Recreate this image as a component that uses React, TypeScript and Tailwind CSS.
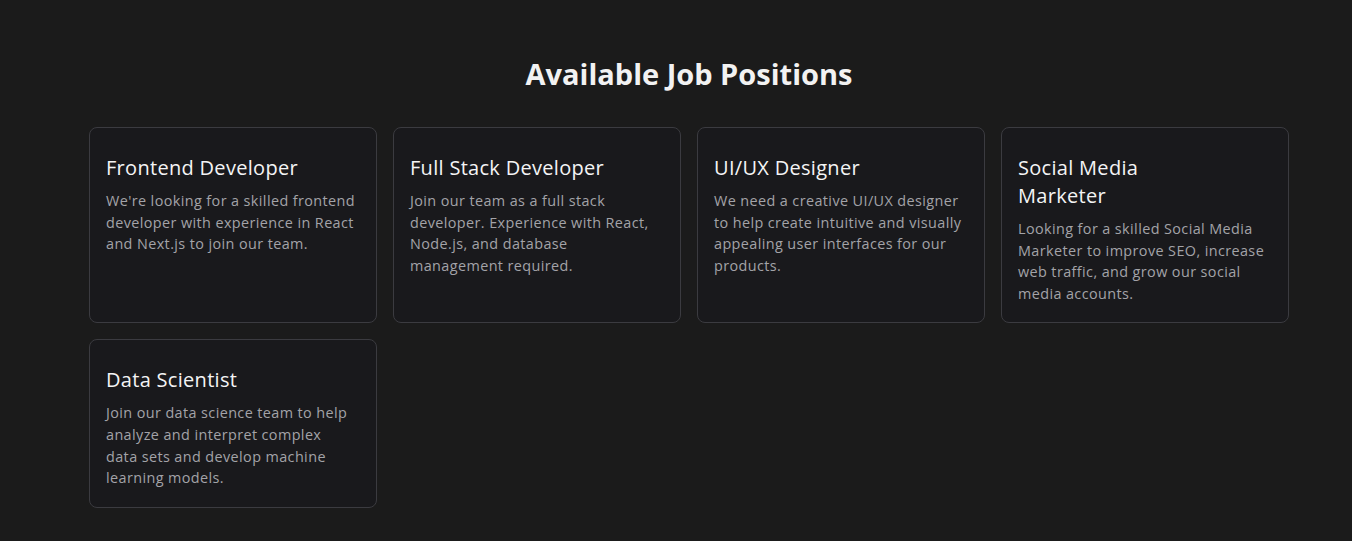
const jobs = [
  {
    title: "Frontend Developer",
    lines: [
      "We're looking for a skilled frontend",
      "developer with experience in React",
      "and Next.js to join our team.",
    ],
  },
  {
    title: "Full Stack Developer",
    lines: [
      "Join our team as a full stack",
      "developer. Experience with React,",
      "Node.js, and database",
      "management required.",
    ],
  },
  {
    title: "UI/UX Designer",
    lines: [
      "We need a creative UI/UX designer",
      "to help create intuitive and visually",
      "appealing user interfaces for our",
      "products.",
    ],
  },
  {
    title: "Social Media Marketer",
    lines: [
      "Looking for a skilled Social Media",
      "Marketer to improve SEO, increase",
      "web traffic, and grow our social",
      "media accounts.",
    ],
  },
  {
    title: "Data Scientist",
    lines: [
      "Join our data science team to help",
      "analyze and interpret complex",
      "data sets and develop machine",
      "learning models.",
    ],
  },
]

const App = () => {
  return (
    <section className="min-h-[541px] bg-[#1b1b1b] text-white font-['Open_Sans',sans-serif]">
      <div className="flex justify-center pl-[26px] pt-[54px] pb-9">
        <div className="w-[1200px]">
          <h2 className="text-center text-[29px] leading-10 font-bold text-[#f2f2f2] mb-[33px]">
            Available Job Positions
          </h2>

          <div className="grid grid-cols-4 gap-4">
            {jobs.map((job, index) => (
              <div
                key={index}
                className="bg-[#19191c] border border-[#3b3b40] rounded-lg px-4 pt-[26px] pb-[18px]"
              >
                <h3 className="text-xl leading-7 font-normal tracking-[0.3px] text-[#f4f4f5] mb-2 max-w-[205px]">
                  {job.title}
                </h3>
                <p className="text-[14.4px] leading-[21.6px] tracking-[0.4px] text-[#a3a3a8] whitespace-nowrap">
                  {job.lines.map((line, i) => (
                    <span key={i} className="block">
                      {line}
                    </span>
                  ))}
                </p>
              </div>
            ))}
          </div>
        </div>
      </div>
    </section>
  )
}

export default App
